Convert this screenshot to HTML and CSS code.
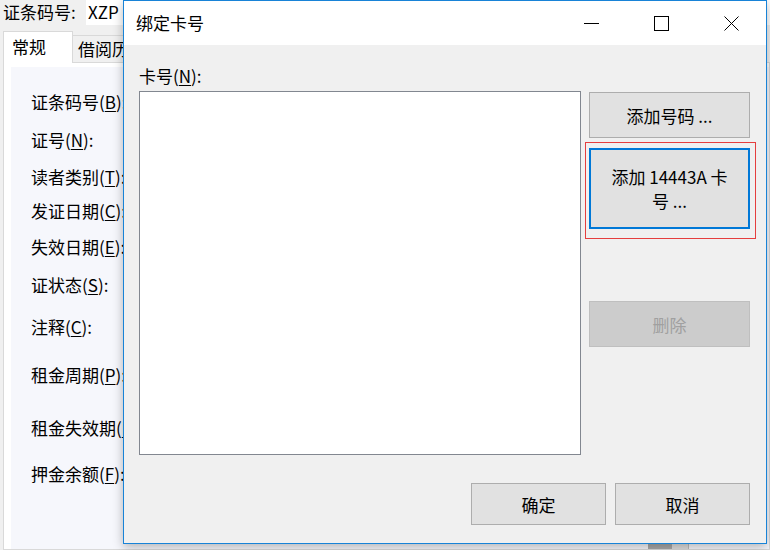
FILE: index.html
```html
<!DOCTYPE html>
<html lang="zh-CN">
<head>
<meta charset="utf-8">
<title>绑定卡号</title>
<link rel="stylesheet" href="styles.css">
</head>
<body>
<div class="desk">
  <div class="bgwin">
    <div class="topline">
      <span class="toplabel">证条码号:</span>
      <span class="topfield">XZP</span>
    </div>
    <div class="tabs">
      <div class="tab sel">常规</div>
      <div class="tab">借阅历史</div>
    </div>
    <div class="panel">
      <div class="inner">
        <div class="form">
          <div class="row">证条码号(<u>B</u>):</div>
          <div class="row">证号(<u>N</u>):</div>
          <div class="row">读者类别(<u>T</u>):</div>
          <div class="row">发证日期(<u>C</u>):</div>
          <div class="row">失效日期(<u>E</u>):</div>
          <div class="row">证状态(<u>S</u>):</div>
          <div class="row">注释(<u>C</u>):</div>
          <div class="row">租金周期(<u>P</u>):</div>
          <div class="row">租金失效期(<u>D</u>):</div>
          <div class="row">押金余额(<u>F</u>):</div>
        </div>
        <div class="hscroll">
          <div class="thumb"></div>
          <div class="track"></div>
        </div>
      </div>
    </div>
  </div>

  <div class="dialog">
    <div class="titlebar">
      <div class="title">绑定卡号</div>
      <div class="caption">
        <div class="capbtn">
          <svg width="15" height="15" viewBox="0 0 15 15"><path d="M0 7.5H15" stroke="#000" stroke-width="1" fill="none"/></svg>
        </div>
        <div class="capbtn">
          <svg width="15" height="15" viewBox="0 0 15 15"><rect x="0.5" y="0.5" width="14" height="14" stroke="#000" stroke-width="1" fill="none"/></svg>
        </div>
        <div class="capbtn">
          <svg width="15" height="15" viewBox="0 0 15 15"><path d="M0.5 0.5L14.5 14.5M14.5 0.5L0.5 14.5" stroke="#000" stroke-width="1" fill="none"/></svg>
        </div>
      </div>
    </div>
    <div class="dbody">
      <div class="main">
        <div class="leftcol">
          <div class="cardlabel">卡号(<u>N</u>):</div>
          <div class="listbox"></div>
        </div>
        <div class="rightcol">
          <button class="btn tall">添加号码 ...</button>
          <div class="focusring">
            <button class="btn primary">添加 14443A 卡号 ...</button>
          </div>
          <button class="btn tall disabled">删除</button>
        </div>
      </div>
      <div class="footer">
        <button class="btn foot">确定</button>
        <button class="btn foot">取消</button>
      </div>
    </div>
  </div>
</div>
</body>
</html>
```
FILE: styles.css
```css
* { box-sizing: border-box; }
html, body {
  margin: 0;
  padding: 0;
  width: 770px;
  height: 550px;
  overflow: hidden;
  background: #f0f0f0;
}
body {
  font-family: "Noto Sans CJK SC", "Noto Sans", sans-serif;
  font-size: 17px;
  color: #000;
}
u { text-decoration: underline; text-underline-offset: 2px; text-decoration-thickness: 1px; }

.desk {
  position: relative;
  width: 770px;
  height: 550px;
}

/* background window */
.bgwin {
  display: flex;
  flex-direction: column;
  height: 550px;
  background: #f0f0f0;
}
.topline {
  display: flex;
  height: 26px;
  align-items: flex-start;
  padding-top: 1px;
}
.toplabel {
  padding-left: 3px;
  width: 86px;
  line-height: 22px;
}
.topfield {
  background: #fff;
  height: 25px;
  margin-top: -1px;
  flex: 1;
  line-height: 23px;
  padding-left: 2px;
}
.tabs {
  display: flex;
  align-items: flex-end;
  height: 32px;
  margin-top: 4px;
  padding-left: 3px;
}
.tab {
  height: 27px;
  border: 1px solid #d9d9d9;
  border-bottom: none;
  background: #f0f0f0;
  padding-left: 5px;
  width: 80px;
  line-height: 26px;
  margin-left: -1px;
}
.tab.sel {
  height: 32px;
  width: 70px;
  background: #fff;
  padding-left: 8px;
  line-height: 30px;
  margin-left: 0;
  position: relative;
  z-index: 1;
  margin-bottom: -1px;
}
.panel {
  flex: 1;
  margin-left: 3px;
  border: 1px solid #d9d9d9;
  background: #fff;
  padding: 4px 0 0 7px;
  display: flex;
}
.inner {
  flex: 1;
  background: #f6f7fc;
  display: flex;
  flex-direction: column;
}
.form {
  display: grid;
  grid-template-rows: 38px 38px 36px 33px 38px 39px 44px 52px 54px 38px;
  padding: 15px 0 0 20px;
}
.row {
  display: flex;
  align-items: center;
  white-space: nowrap;
}
.hscroll {
  margin-top: auto;
  display: flex;
  height: 7px;
  padding-left: 637px;
}
.thumb { width: 24px; background: #a9a9a9; }
.track { width: 17px; background: #dedede; border-right: 1px solid #bcbcbc; }

/* dialog */
.dialog {
  position: absolute;
  left: 123px;
  top: 0;
  width: 644px;
  height: 544px;
  border: 1px solid #1883d7;
  background: #f0f0f0;
  display: flex;
  flex-direction: column;
  box-shadow: 0 3px 10px rgba(0, 0, 0, 0.28);
}
.titlebar {
  height: 44px;
  background: #fff;
  display: flex;
  align-items: center;
}
.title {
  padding-left: 12px;
  flex: 1;
  line-height: 22px;
}
.caption {
  display: flex;
  height: 44px;
}
.capbtn {
  width: 70px;
  height: 44px;
  display: flex;
  align-items: center;
  justify-content: center;
}
.capbtn svg { display: block; }

.dbody {
  flex: 1;
  display: flex;
  flex-direction: column;
  padding: 0 16px 17px 15px;
}
.main {
  display: flex;
  gap: 8px;
}
.leftcol {
  width: 442px;
  display: flex;
  flex-direction: column;
}
.cardlabel {
  margin-top: 20px;
  line-height: 22px;
  height: 22px;
}
.listbox {
  margin-top: 4px;
  height: 364px;
  background: #fff;
  border: 1px solid #828790;
}
.rightcol {
  width: 161px;
  display: flex;
  flex-direction: column;
  padding-top: 47px;
}
.btn {
  font-family: "Noto Sans CJK SC", "Noto Sans", sans-serif;
  font-size: 17px;
  color: #000;
  background: #e1e1e1;
  border: 1px solid #adadad;
  margin: 0;
  padding: 0;
  display: flex;
  align-items: center;
  justify-content: center;
}
.btn.tall {
  width: 161px;
  height: 46px;
}
.focusring {
  margin: 4px -6px 0 -4px;
  border: 1px solid #e53e3e;
  padding: 5px 5px 9px 3px;
}
.btn.primary {
  width: 161px;
  height: 81px;
  border: 2px solid #0078d7;
  line-height: 24px;
  padding: 0 16px;
  text-align: center;
}
.btn.disabled {
  margin-top: 62px;
  background: #cccccc;
  border-color: #bfbfbf;
  color: #a0a0a0;
}
.footer {
  margin-top: 28px;
  display: flex;
  justify-content: flex-end;
  gap: 9px;
}
.btn.foot {
  width: 135px;
  height: 42px;
}
```
